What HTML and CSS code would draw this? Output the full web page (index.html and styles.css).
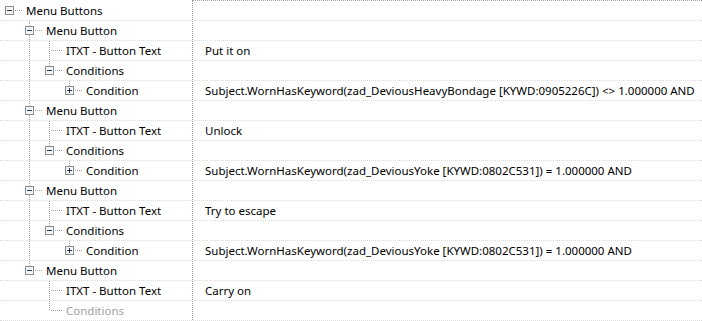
FILE: index.html
```html
<!DOCTYPE html>
<html>
<head>
<meta charset="utf-8">
<title>Menu Buttons</title>
<link rel="stylesheet" href="styles.css">
</head>
<body>

<div class="tree">
  <div class="topline"></div>

  <div class="row">
    <div class="name">
      <span class="node root"><svg class="box" width="9" height="9"><rect x="0.5" y="0.5" width="8" height="8" class="frame"/><path d="M2 4.5h5" class="sign"/></svg></span>
      <span class="label">Menu Buttons</span>
    </div>
    <div class="val"></div>
  </div>

  <!-- menu button 1 -->
  <div class="row">
    <div class="name">
      <span class="g"></span>
      <span class="node mid"><svg class="box" width="9" height="9"><rect x="0.5" y="0.5" width="8" height="8" class="frame"/><path d="M2 4.5h5" class="sign"/></svg></span>
      <span class="label">Menu Button</span>
    </div>
    <div class="val"></div>
  </div>
  <div class="row">
    <div class="name">
      <span class="g"></span><span class="g pipe"></span>
      <span class="node mid"></span>
      <span class="label">ITXT - Button Text</span>
    </div>
    <div class="val">Put it on</div>
  </div>
  <div class="row">
    <div class="name">
      <span class="g"></span><span class="g pipe"></span>
      <span class="node last"><svg class="box" width="9" height="9"><rect x="0.5" y="0.5" width="8" height="8" class="frame"/><path d="M2 4.5h5" class="sign"/></svg></span>
      <span class="label">Conditions</span>
    </div>
    <div class="val"></div>
  </div>
  <div class="row">
    <div class="name">
      <span class="g"></span><span class="g pipe"></span><span class="g"></span>
      <span class="node last"><svg class="box" width="9" height="9"><rect x="0.5" y="0.5" width="8" height="8" class="frame"/><path d="M2 4.5h5M4.5 2v5" class="sign"/></svg></span>
      <span class="label">Condition</span>
    </div>
    <div class="val">Subject.WornHasKeyword(zad_DeviousHeavyBondage [KYWD:0905226C]) &lt;&gt; 1.000000 AND</div>
  </div>

  <!-- menu button 2 -->
  <div class="row">
    <div class="name">
      <span class="g"></span>
      <span class="node mid"><svg class="box" width="9" height="9"><rect x="0.5" y="0.5" width="8" height="8" class="frame"/><path d="M2 4.5h5" class="sign"/></svg></span>
      <span class="label">Menu Button</span>
    </div>
    <div class="val"></div>
  </div>
  <div class="row">
    <div class="name">
      <span class="g"></span><span class="g pipe"></span>
      <span class="node mid"></span>
      <span class="label">ITXT - Button Text</span>
    </div>
    <div class="val">Unlock</div>
  </div>
  <div class="row">
    <div class="name">
      <span class="g"></span><span class="g pipe"></span>
      <span class="node last"><svg class="box" width="9" height="9"><rect x="0.5" y="0.5" width="8" height="8" class="frame"/><path d="M2 4.5h5" class="sign"/></svg></span>
      <span class="label">Conditions</span>
    </div>
    <div class="val"></div>
  </div>
  <div class="row">
    <div class="name">
      <span class="g"></span><span class="g pipe"></span><span class="g"></span>
      <span class="node last"><svg class="box" width="9" height="9"><rect x="0.5" y="0.5" width="8" height="8" class="frame"/><path d="M2 4.5h5M4.5 2v5" class="sign"/></svg></span>
      <span class="label">Condition</span>
    </div>
    <div class="val">Subject.WornHasKeyword(zad_DeviousYoke [KYWD:0802C531]) = 1.000000 AND</div>
  </div>

  <!-- menu button 3 -->
  <div class="row">
    <div class="name">
      <span class="g"></span>
      <span class="node mid"><svg class="box" width="9" height="9"><rect x="0.5" y="0.5" width="8" height="8" class="frame"/><path d="M2 4.5h5" class="sign"/></svg></span>
      <span class="label">Menu Button</span>
    </div>
    <div class="val"></div>
  </div>
  <div class="row">
    <div class="name">
      <span class="g"></span><span class="g pipe"></span>
      <span class="node mid"></span>
      <span class="label">ITXT - Button Text</span>
    </div>
    <div class="val">Try to escape</div>
  </div>
  <div class="row">
    <div class="name">
      <span class="g"></span><span class="g pipe"></span>
      <span class="node last"><svg class="box" width="9" height="9"><rect x="0.5" y="0.5" width="8" height="8" class="frame"/><path d="M2 4.5h5" class="sign"/></svg></span>
      <span class="label">Conditions</span>
    </div>
    <div class="val"></div>
  </div>
  <div class="row">
    <div class="name">
      <span class="g"></span><span class="g pipe"></span><span class="g"></span>
      <span class="node last"><svg class="box" width="9" height="9"><rect x="0.5" y="0.5" width="8" height="8" class="frame"/><path d="M2 4.5h5M4.5 2v5" class="sign"/></svg></span>
      <span class="label">Condition</span>
    </div>
    <div class="val">Subject.WornHasKeyword(zad_DeviousYoke [KYWD:0802C531]) = 1.000000 AND</div>
  </div>

  <!-- menu button 4 -->
  <div class="row">
    <div class="name">
      <span class="g"></span>
      <span class="node last"><svg class="box" width="9" height="9"><rect x="0.5" y="0.5" width="8" height="8" class="frame"/><path d="M2 4.5h5" class="sign"/></svg></span>
      <span class="label">Menu Button</span>
    </div>
    <div class="val"></div>
  </div>
  <div class="row">
    <div class="name">
      <span class="g"></span><span class="g"></span>
      <span class="node mid"></span>
      <span class="label">ITXT - Button Text</span>
    </div>
    <div class="val">Carry on</div>
  </div>
  <div class="row">
    <div class="name">
      <span class="g"></span><span class="g"></span>
      <span class="node last"></span>
      <span class="label dim">Conditions</span>
    </div>
    <div class="val"></div>
  </div>
</div>

</body>
</html>
```

FILE: styles.css
```css
body {
	margin: 0;
	background: #FFFFFF;
	font-family: 'Noto Sans', 'Open Sans', sans-serif;
	font-size: 11.5px;
	color: #000000;
}

.tree {
	width: 702px;
}

.topline {
	height: 0;
	margin-left: 192px;
	border-top: 1px dotted #A0A0A0;
	border-left: 1px dotted #A0A0A0;
}

.row {
	display: flex;
	height: 20px;
	box-sizing: border-box;
	border-bottom: 1px dotted #DCDCDC;
}

.name {
	width: 192px;
	flex: none;
	display: flex;
	align-items: stretch;
}

.val {
	flex: 1;
	border-left: 1px dotted #A0A0A0;
	padding-left: 12px;
	line-height: 19px;
	white-space: nowrap;
}

/* indent guides, 20px per level */
.g {
	width: 20px;
	flex: none;
}
.pipe {
	background: repeating-linear-gradient(to bottom, #A0A0A0 0 1px, transparent 1px 2px) 9px 0 / 1px 100% no-repeat;
}

/* node connector cell */
.node {
	width: 24px;
	flex: none;
	display: flex;
	align-items: center;
	padding-left: 5px;
	box-sizing: border-box;
	background:
		repeating-linear-gradient(to right, #A0A0A0 0 1px, transparent 1px 2px) 11px 9px / 12px 1px no-repeat;
}
.node.mid {
	background:
		repeating-linear-gradient(to right, #A0A0A0 0 1px, transparent 1px 2px) 11px 9px / 12px 1px no-repeat,
		repeating-linear-gradient(to bottom, #A0A0A0 0 1px, transparent 1px 2px) 9px 0 / 1px 100% no-repeat;
}
.node.last {
	background:
		repeating-linear-gradient(to right, #A0A0A0 0 1px, transparent 1px 2px) 11px 9px / 12px 1px no-repeat,
		repeating-linear-gradient(to bottom, #A0A0A0 0 1px, transparent 1px 2px) 9px 0 / 1px 10px no-repeat;
}

.box {
	display: block;
	margin-top: -1px;
}
.frame {
	fill: #F4F4F4;
	stroke: #8E8F8F;
}
.sign {
	stroke: #2A3A5C;
	stroke-width: 1;
	fill: none;
	shape-rendering: crispEdges;
}

.label {
	padding-left: 2px;
	line-height: 19px;
	white-space: nowrap;
}
.dim {
	color: #A0A0A0;
}
```
